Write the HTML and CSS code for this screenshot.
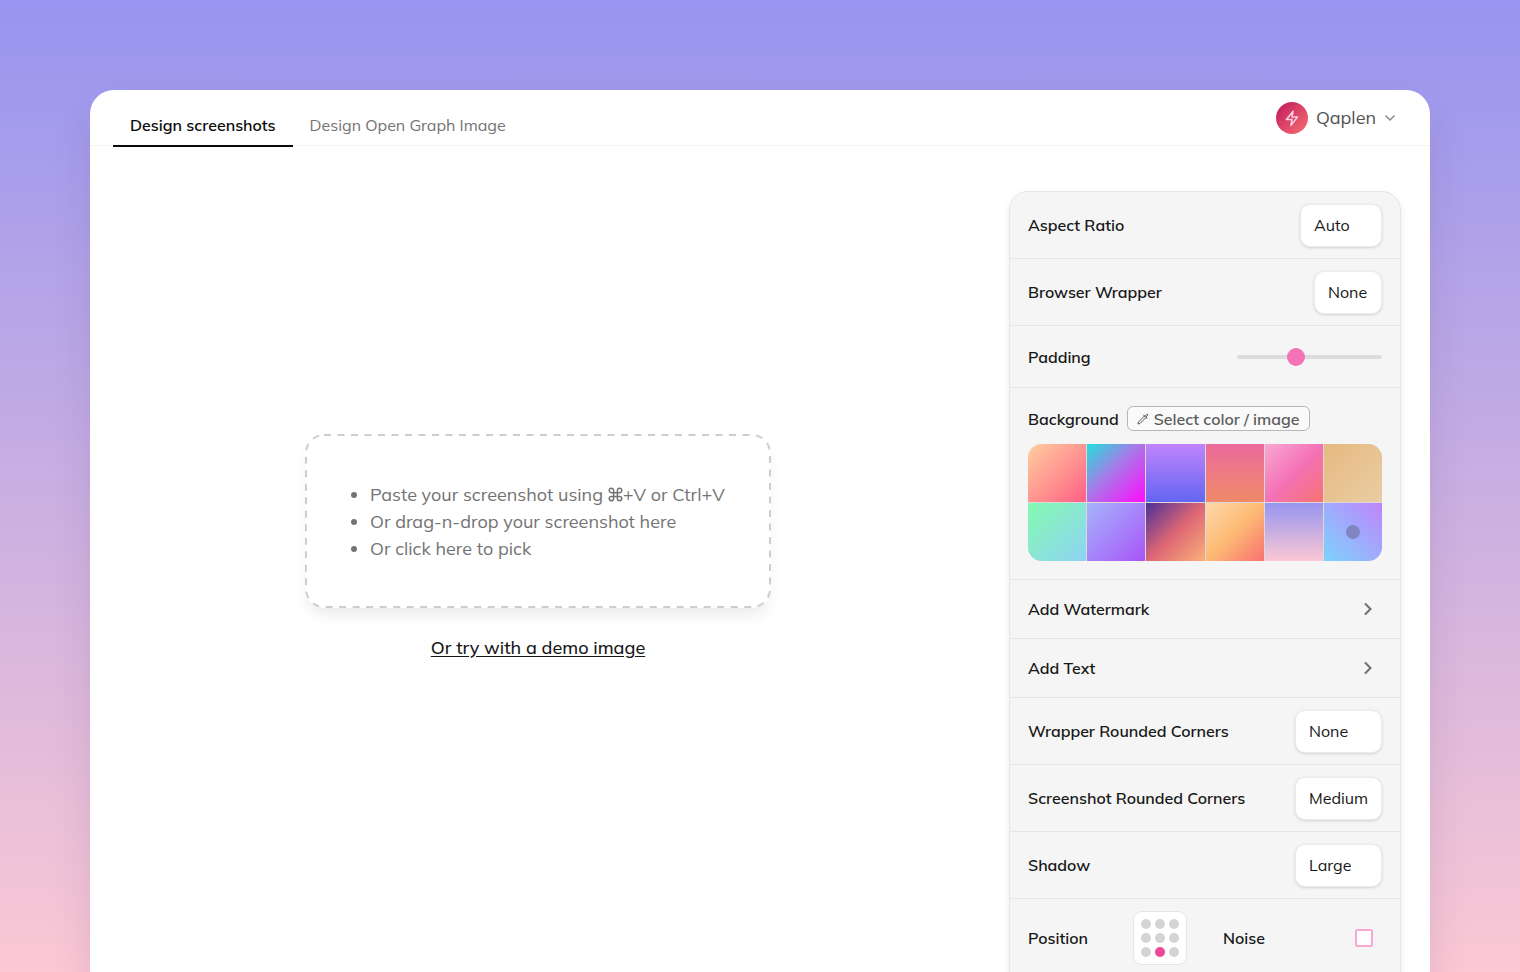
FILE: index.html
```html
<!DOCTYPE html>
<html lang="en">
<head>
<meta charset="utf-8">
<title>Design screenshots</title>
<link rel="stylesheet" href="styles.css">
</head>
<body>
<div class="app">
  <header class="topbar">
    <nav class="tabs">
      <a class="tab tab-active" href="#screenshots">Design screenshots</a>
      <a class="tab" href="#og">Design Open Graph Image</a>
    </nav>
    <button class="account" type="button">
      <span class="avatar">
        <svg width="18" height="18" viewBox="0 0 24 24" fill="none" stroke="currentColor" stroke-width="2" stroke-linejoin="round"><path d="M13.500 3 4.500 14H12l-1.500 8 9-11.500H12z"/></svg>
      </span>
      <span>Qaplen</span>
      <svg class="caret" width="12" height="12" viewBox="0 0 12 12" fill="none" stroke="currentColor" stroke-width="1.500"><path d="m1.500 3.500 4.500 4.500 4.500-4.500"/></svg>
    </button>
  </header>
  <main class="workspace">
    <section class="canvas">
      <div class="dropzone">
        <svg class="dashes" aria-hidden="true"><rect class="dash-line" x="1" y="1" rx="18"/></svg>
        <ul class="hints">
          <li>Paste your screenshot using <svg class="cmd" viewBox="0 0 24 24" fill="none" stroke="currentColor" stroke-width="2.400"><path d="M9 9V5.500A3.500 3.500 0 1 0 5.500 9h13A3.500 3.500 0 1 0 15 5.500v13a3.500 3.500 0 1 0 3.500-3.500h-13A3.500 3.500 0 1 0 9 18.500z"/></svg>+V or Ctrl+V</li>
          <li>Or drag-n-drop your screenshot here</li>
          <li>Or click here to pick</li>
        </ul>
        <input class="file" type="file" aria-label="Pick a screenshot">
      </div>
      <a class="demo" href="#demo">Or try with a demo image</a>
    </section>
    <form class="panel">
      <div class="row">
        <label for="aspect">Aspect Ratio</label>
        <select id="aspect" class="select select-medium"><option>Auto</option></select>
      </div>
      <div class="row">
        <label for="browser">Browser Wrapper</label>
        <select id="browser" class="select select-small"><option>None</option></select>
      </div>
      <div class="row row-slider">
        <label for="padding">Padding</label>
        <input id="padding" class="slider" type="range" min="0" max="100" value="39">
      </div>
      <div class="background">
        <div class="background-head">
          <span>Background</span>
          <button class="pick" type="button">
            <svg width="12" height="12" viewBox="0 0 12 12" fill="none" stroke="currentColor" stroke-linejoin="round" stroke-linecap="round"><path d="m7.500 3-6 6-.5 2 2-.5 6-6M6.500 2l3.500 3.500M8 3.200l1.500-1.700c1-1 2 0 1 1L9 4"/></svg>
            Select color / image
          </button>
        </div>
        <div class="swatches">
          <button type="button" aria-label="Peach" class="swatch peach"></button>
          <button type="button" aria-label="Neon" class="swatch neon"></button>
          <button type="button" aria-label="Violet" class="swatch violet"></button>
          <button type="button" aria-label="Coral" class="swatch coral"></button>
          <button type="button" aria-label="Pink" class="swatch pink"></button>
          <button type="button" aria-label="Sand" class="swatch sand"></button>
          <button type="button" aria-label="Mint" class="swatch mint"></button>
          <button type="button" aria-label="Lavender" class="swatch lavender"></button>
          <button type="button" aria-label="Sunset" class="swatch sunset"></button>
          <button type="button" aria-label="Apricot" class="swatch apricot"></button>
          <button type="button" aria-label="Dusk" class="swatch dusk"></button>
          <button type="button" aria-label="Sky" class="swatch sky"><span class="picked"></span></button>
        </div>
      </div>
      <button class="row row-link" type="button">Add Watermark
        <svg class="chevron" width="14" height="14" viewBox="0 0 14 14" fill="none" stroke="currentColor" stroke-width="2" stroke-linecap="round"><path d="m4.500 2 5 5-5 5"/></svg>
      </button>
      <button class="row row-link" type="button">Add Text
        <svg class="chevron" width="14" height="14" viewBox="0 0 14 14" fill="none" stroke="currentColor" stroke-width="2" stroke-linecap="round"><path d="m4.500 2 5 5-5 5"/></svg>
      </button>
      <div class="row">
        <label for="wrapper">Wrapper Rounded Corners</label>
        <select id="wrapper" class="select select-large"><option>None</option></select>
      </div>
      <div class="row">
        <label for="corners">Screenshot Rounded Corners</label>
        <select id="corners" class="select select-large"><option>Medium</option></select>
      </div>
      <div class="row">
        <label for="shadow">Shadow</label>
        <select id="shadow" class="select select-large"><option>Large</option></select>
      </div>
      <div class="row row-split">
        <div class="cell">
          <span>Position</span>
          <div class="position" role="radiogroup" aria-label="Position">
            <input type="radio" name="pos" aria-label="Top left">
            <input type="radio" name="pos" aria-label="Top">
            <input type="radio" name="pos" aria-label="Top right">
            <input type="radio" name="pos" aria-label="Left">
            <input type="radio" name="pos" aria-label="Center">
            <input type="radio" name="pos" aria-label="Right">
            <input type="radio" name="pos" aria-label="Bottom left">
            <input type="radio" name="pos" aria-label="Bottom" checked>
            <input type="radio" name="pos" aria-label="Bottom right">
          </div>
        </div>
        <div class="cell">
          <label for="noise">Noise</label>
          <input id="noise" class="check" type="checkbox">
        </div>
      </div>
    </form>
  </main>
</div>
</body>
</html>
```

FILE: styles.css
```css
* { box-sizing: border-box; }

body {
  margin: 0;
  height: 100vh;
  overflow: hidden;
  padding: 90px 90px 0;
  background: linear-gradient(#9795f0, #fbc8d4);
  font-family: Mulish, Lato, "Liberation Sans", sans-serif;
  font-size: 16px;
  line-height: 24px;
  color: #171717;
}

button, input, select { font: inherit; color: inherit; margin: 0; }
button { border: 0; padding: 0; background: none; }

.app {
  min-height: 100vh;
  background: #fff;
  border-radius: 24px;
  box-shadow: 0 20px 40px rgba(60, 30, 90, 0.12);
}

.topbar {
  display: flex;
  justify-content: space-between;
  height: 56px;
  padding: 0 34px 0 23px;
  border-bottom: 1px solid #f4f4f4;
}

.tabs { display: flex; height: 57px; }
.tab {
  display: flex;
  align-items: flex-end;
  padding: 0 17px 8px;
  border-bottom: 2px solid transparent;
  color: #737373;
  text-decoration: none;
}
.tab-active { border-color: #0a0a0a; color: #0a0a0a; font-weight: 600; }

.account {
  display: flex;
  align-items: center;
  gap: 8px;
  font-size: 18px;
  color: #525252;
}
.avatar {
  display: grid;
  place-items: center;
  width: 32px;
  height: 32px;
  border-radius: 50%;
  background: linear-gradient(135deg, #be185d, #f87171);
  color: #fbcfe8;
}
.caret { color: #8a8a8a; }

.workspace {
  display: flex;
  gap: 52px;
  padding: 45px 29px 0;
}
.canvas {
  flex: 1;
  display: flex;
  flex-direction: column;
  align-items: center;
  gap: 28px;
  padding-top: 243px;
}

.dropzone {
  position: relative;
  width: 466px;
  max-width: 100%;
  padding: 47px 24px 46px 65px;
  border-radius: 19px;
  box-shadow: 0 10px 15px -3px rgba(0, 0, 0, 0.08);
  color: #737373;
}
.dashes { position: absolute; inset: 0; width: 100%; height: 100%; }
.dash-line {
  width: calc(100% - 2px);
  height: calc(100% - 2px);
  fill: none;
  stroke: #cdcdcd;
  stroke-width: 2px;
  stroke-dasharray: 7 6.5;
}
.hints { margin: 0; padding: 0; font-size: 18px; line-height: 27px; }
.cmd { width: 15px; height: 15px; vertical-align: -1px; }
.file { position: absolute; inset: 0; width: 100%; height: 100%; opacity: 0; }

.demo { font-size: 18px; font-weight: 500; color: #171717; text-underline-offset: 2px; }

.panel {
  width: 392px;
  padding-bottom: 60px;
  border: 1px solid #e6e6e6;
  border-radius: 19px;
  background: #f5f5f5;
  box-shadow: 0 4px 8px rgba(0, 0, 0, 0.08);
  font-weight: 600;
}
.row {
  display: flex;
  align-items: center;
  justify-content: space-between;
  width: 100%;
  height: 67px;
  padding: 0 18px;
  border-bottom: 1px solid #e6e6e6;
}
.row-slider { height: 62px; }
.row-link { height: 59px; font-weight: 600; }
.row-split { height: 78px; gap: 36px; }

.select {
  appearance: none;
  height: 43px;
  padding: 0 13px;
  border: 1px solid #ebebeb;
  border-radius: 10px;
  background: #fff;
  box-shadow: 0 1px 3px rgba(0, 0, 0, 0.15);
  font-weight: 400;
}
.select-small { width: 68px; }
.select-medium { width: 82px; }
.select-large { width: 87px; }

.slider { appearance: none; width: 145px; height: 18px; background: none; }
.slider::-webkit-slider-runnable-track { height: 4px; border-radius: 2px; background: #dcdcdc; }
.slider::-webkit-slider-thumb {
  appearance: none;
  width: 18px;
  height: 18px;
  margin-top: -7px;
  border-radius: 50%;
  background: #f472b6;
}

.background { padding: 18px; border-bottom: 1px solid #e6e6e6; }
.background-head { display: flex; align-items: center; gap: 8px; margin-bottom: 13px; }
.pick {
  display: flex;
  align-items: center;
  gap: 5px;
  height: 25px;
  padding: 0 9px;
  border: 1px solid #b4b7bb;
  border-radius: 6px;
  background: #fafafa;
  color: #5c5c5c;
  font-weight: 600;
}

.swatches {
  display: grid;
  grid-template-columns: repeat(6, 1fr);
  gap: 1px;
  overflow: hidden;
  border-radius: 14px;
  background: #ddd8dc;
}
.swatch { display: grid; place-items: center; height: 58px; }
.peach { background: linear-gradient(135deg, #ffcf9f, #ff5f83); }
.neon { background: linear-gradient(135deg, #22e1dc, #a879e8 45%, #ff0cff); }
.violet { background: linear-gradient(#c084fc, #6366f1); }
.coral { background: linear-gradient(#ec6b9d, #ef8a68); }
.pink { background: linear-gradient(135deg, #f9a8d4, #f472b6 50%, #f87171); }
.sand { background: linear-gradient(135deg, #e6b980, #eacda3); }
.mint { background: linear-gradient(135deg, #84fab0, #8fd3f4); }
.lavender { background: linear-gradient(135deg, #a5b4fc, #a855f7); }
.sunset { background: linear-gradient(135deg, #4c3098, #dc6675 50%, #fcb078); }
.apricot { background: linear-gradient(135deg, #fed7aa, #fdba74 50%, #f87171); }
.dusk { background: linear-gradient(#9795f0, #fbc8d4); }
.sky { background: linear-gradient(45deg, #7dd3fc, #c084fc); }
.picked { width: 14px; height: 14px; border-radius: 50%; background: #7f86c2; }

.chevron { margin-right: 7px; color: #6f6f6f; }

.cell { flex: 1; display: flex; align-items: center; justify-content: space-between; }
.position {
  display: grid;
  grid-template-columns: repeat(3, 10px);
  gap: 4px;
  padding: 7px;
  border: 1px solid #e5e5e5;
  border-radius: 9px;
  background: #fff;
}
.position input {
  appearance: none;
  width: 10px;
  height: 10px;
  border-radius: 50%;
  background: #d4d4d4;
}
.position input:checked { background: #ec4899; }
.check {
  appearance: none;
  width: 18px;
  height: 18px;
  margin-right: 9px;
  border: 2px solid #f9a8d4;
  border-radius: 2px;
  background: #fff;
}
```
